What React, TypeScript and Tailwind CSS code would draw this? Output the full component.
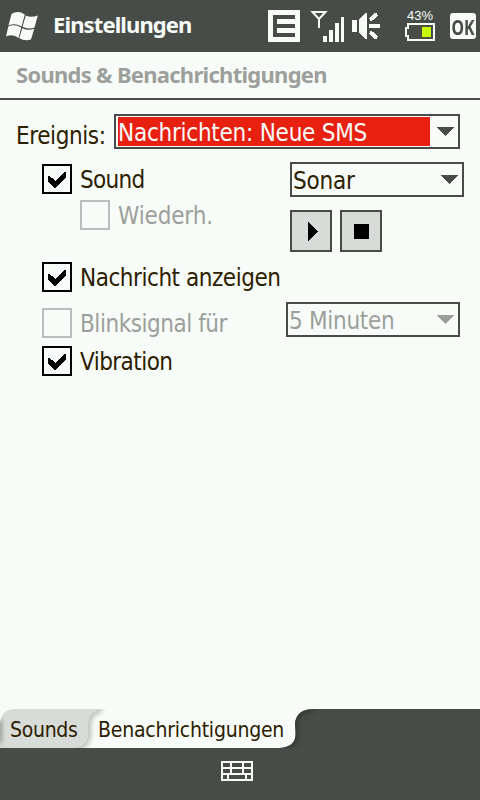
import React from "react";

const FONT = "font-['DejaVu_Sans_Condensed','DejaVu_Sans',sans-serif] [font-stretch:condensed]";

function Check({ x = "", label, checked, disabled, spacing = "" }: { x?: string; label: string; checked?: boolean; disabled?: boolean; spacing?: string }) {
  return (
    <div className={`flex h-[30px] items-start gap-2 ${x}`}>
      <div className={`h-[30px] w-[30px] shrink-0 border-2 ${disabled ? "border-[#bdbdbd]" : "border-black"}`}>
        {checked && (
          <svg width="26" height="26" viewBox="0 0 26 26" shapeRendering="crispEdges">
            <path d="M4 9.500h1l6.500 5.500 9.500-9h1v5.500L12 22h-2L4 15z" fill="#000" />
          </svg>
        )}
      </div>
      <span className={`whitespace-nowrap text-[24px] leading-[32px] ${spacing} ${disabled ? "text-[#9c9f9b]" : "text-[#2c2000]"}`}>{label}</span>
    </div>
  );
}

function Combo({ width, label, selected, disabled, spacing = "" }: { width: string; label: string; selected?: boolean; disabled?: boolean; spacing?: string }) {
  return (
    <div className={`flex h-[35px] shrink-0 justify-between border-2 border-[#484c48] ${width}`}>
      <div className={selected ? "ml-[2px] mt-px h-[29px] w-[312px] bg-[#e82010]" : "ml-px mt-px h-[29px]"}>
        <span className={`block whitespace-nowrap text-[24px] leading-[32px] ${spacing} ${selected ? "text-[#f8fcf8]" : disabled ? "text-[#9c9f9b]" : "text-[#2c2000]"}`}>{label}</span>
      </div>
      <svg className="mr-1 mt-[11px]" width="17" height="9" viewBox="0 0 17 9" shapeRendering="crispEdges">
        <path d="M0 0h17L8.500 9z" fill={disabled ? "#9c9f9b" : "#484c48"} />
      </svg>
    </div>
  );
}

export default function App() {
  return (
    <div className={`flex h-[800px] w-[480px] flex-col overflow-hidden bg-[#f8fcf8] ${FONT}`}>
      <header className="flex h-[52px] shrink-0 bg-[#484c48]">
        <svg className="ml-1 mt-2" width="36" height="36" viewBox="4 8 36 36" fill="#f8fcf8">
          <path d="M11.500 14Q18 10 24.800 14.500L21.500 26.500Q15 22.500 8.500 25.500Z" />
          <path d="M25.800 15.500Q31 18 37.800 15.500L34.500 27.500Q28 30 22.500 26.800Z" />
          <path d="M8.300 26.600Q15 23.500 21.200 27.800L18.500 38Q13 33.500 6 36.500Z" />
          <path d="M22.200 28.200Q28 31.200 34.200 28.800L31 39.500Q25 41.500 19.300 38.200Z" />
        </svg>
        <h1 className="ml-[13px] w-[215px] whitespace-nowrap font-['Noto_Sans',sans-serif] text-[22px] font-bold leading-[48px] tracking-[-0.88px] text-[#f8fcf8]">Einstellungen</h1>
        <svg width="182" height="52" viewBox="268 0 182 52" fill="#f8fcf8" shapeRendering="crispEdges">
          <path d="M268 10h32v32h-32zM273 15V37H295V33H277V28H295V24H277V19H295V15z" fillRule="evenodd" />
          <path d="M312.500 12h13l-6.500 7zM319 18v10" fill="none" stroke="#f8fcf8" strokeWidth="2" shapeRendering="auto" />
          <path d="M323 36h4v6h-4zM329 30h4v12h-4zM335 23h4v19h-4zM341 17h3v25h-3z" />
          <path d="M352 20h5v12h-5zM359 20l6-7h2v26h-2l-6-7z" />
          <path d="M369 26h11M370 20l7-6M370 32l7 6" stroke="#f8fcf8" strokeWidth="4" />
          <text x="407" y="20" fontSize="12.500" textLength="26" lengthAdjust="spacingAndGlyphs" className="font-['Liberation_Sans',sans-serif]">43%</text>
          <path d="M408 24h26v16h-26v-4h-2v-8h2z" fill="none" stroke="#f8fcf8" strokeWidth="2" />
          <path d="M422 27h9v10h-9z" fill="#c8fc00" />
        </svg>
        <div className="mt-[13px] flex h-[26px] w-[26px] shrink-0 items-center justify-center rounded-[3px] bg-[#f8fcf8]">
          <span className="inline-block scale-x-[.72] font-['Noto_Sans',sans-serif] text-[22px] font-bold leading-[26px] text-[#484c48]">OK</span>
        </div>
      </header>
      <h2 className="h-12 shrink-0 whitespace-nowrap border-b-2 border-[#484c48] pl-4 font-['Noto_Sans',sans-serif] text-[22px] font-bold leading-[44px] tracking-[-0.72px] text-[#9c9f9b]">Sounds &amp; Benachrichtigungen</h2>
      <main className="flex grow flex-col pt-[14px]">
        <div className="flex h-[35px] pl-4">
          <span className="w-[98px] whitespace-nowrap text-[24px] leading-[44px] tracking-[-0.4px] text-[#2c2000]">Ereignis:</span>
          <Combo width="w-[346px]" label="Nachrichten: Neue SMS" spacing="tracking-[-0.25px]" selected />
        </div>
        <div className="mt-[13px] flex h-[90px] pl-[42px]">
          <div className="flex w-[248px] flex-col gap-[6px] pt-[2px]">
            <Check label="Sound" spacing="tracking-[-0.7px]" checked />
            <Check x="pl-[38px]" label="Wiederh." spacing="tracking-[-0.15px]" disabled />
          </div>
          <div className="flex flex-col gap-[13px]">
            <Combo width="w-[174px]" label="Sonar" spacing="tracking-[-0.2px]" />
            <div className="flex gap-2">
              <button className="h-[42px] w-[42px] border-2 border-[#484c48] bg-[#d8dcd8] pl-4">
                <svg width="10" height="19" viewBox="0 0 10 19" shapeRendering="crispEdges"><path d="M0 0l10 9.500L0 19z" /></svg>
              </button>
              <button className="flex h-[42px] w-[42px] items-center justify-center border-2 border-[#484c48] bg-[#d8dcd8]">
                <span className="h-[15px] w-[15px] bg-black" />
              </button>
            </div>
          </div>
        </div>
        <Check x="mt-[10px] pl-[42px]" label="Nachricht anzeigen" spacing="tracking-[-0.47px]" checked />
        <div className="mt-[10px] flex h-[36px] pl-[42px]">
          <div className="w-[244px] pt-[6px]"><Check label="Blinksignal für" spacing="tracking-[-0.46px]" disabled /></div>
          <Combo width="w-[174px]" label="5 Minuten" spacing="tracking-[-0.3px]" disabled />
        </div>
        <Check x="mt-2 pl-[42px]" label="Vibration" spacing="tracking-[-0.55px]" checked />
      </main>
      <nav className="relative flex h-[39px] shrink-0 text-[21px] leading-[42px] text-[#2c2000]">
        <svg className="absolute inset-0" width="480" height="39" viewBox="0 0 480 39">
          <defs>
            <filter id="soft" x="-50%" y="-50%" width="200%" height="200%"><feGaussianBlur stdDeviation="2.500" /></filter>
            <clipPath id="bar"><path d="M280 39C300 37 295 24 295 14Q297 0 313 0H480V39z" /></clipPath>
            <clipPath id="front"><path d="M102 0Q88 2 88 16V24Q88 38 72 39H120V0z" /></clipPath>
            <clipPath id="back"><path d="M0 14Q2 0 14 0H102Q88 2 88 16V24Q88 38 72 39H0z" /></clipPath>
          </defs>
          <path d="M280 39C300 37 295 24 295 14Q297 0 313 0H480V39z" fill="#484c48" />
          <path d="M280 39C300 37 295 24 295 14Q297 0 313 0" fill="none" stroke="#303430" strokeWidth="5" filter="url(#soft)" clipPath="url(#bar)" />
          <path d="M0 14Q2 0 14 0H102Q88 2 88 16V24Q88 38 72 39H0z" fill="#d8dcd8" />
          <rect x="-4" y="10" width="6" height="24" fill="#989c98" filter="url(#soft)" clipPath="url(#back)" />
          <path d="M102 0Q88 2 88 16V24Q88 38 72 39" fill="none" stroke="#b8bcb8" strokeWidth="6" filter="url(#soft)" clipPath="url(#front)" />
        </svg>
        <span className="relative w-[88px] pl-[10px] tracking-[-0.3px]">Sounds</span>
        <span className="relative pl-[10px] tracking-[-0.22px]">Benachrichtigungen</span>
      </nav>
      <footer className="flex h-[52px] shrink-0 bg-[#484c48] pl-[221px] pt-[13px]">
        <svg width="32" height="20" viewBox="0 0 32 20" shapeRendering="crispEdges">
          <path d="M0 0h32v20H0z" fill="#f8fcf8" />
          <path d="M2 2h7v4H2zM11 2h10v4H11zM23 2h7v4h-7zM2 8h7v4H2zM11 8h10v4H11zM23 8h7v4h-7zM2 14h4v4H2zM8 14h16v4H8zM26 14h4v4h-4z" fill="#484c48" />
        </svg>
      </footer>
    </div>
  );
}
